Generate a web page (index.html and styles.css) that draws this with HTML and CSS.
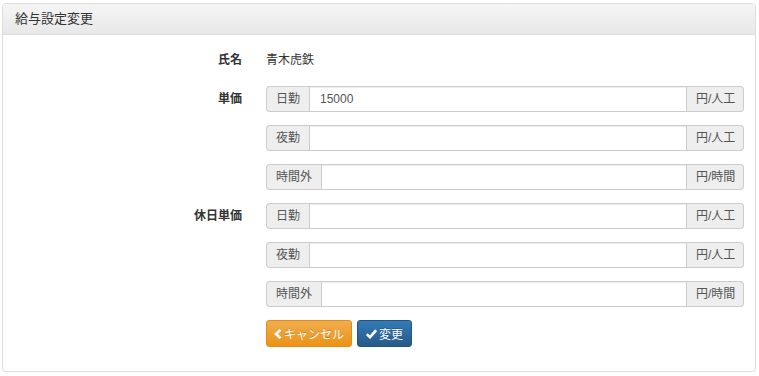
FILE: index.html
```html
<!DOCTYPE html>
<html lang="ja">
<head>
    <meta charset="UTF-8">
    <title>給与設定変更</title>
    <link rel="stylesheet" href="styles.css">
</head>
<body>

    <div class="panel">
        <div class="panel-heading">給与設定変更</div>

        <!-- Form -->
        <div class="panel-body form-horizontal">
            <div class="form-group">
                <label class="control-label">氏名</label>
                <div class="static-value">青木虎鉄</div>
            </div>

            <div class="form-group">
                <label class="control-label">単価</label>
                <div class="input-group">
                    <span class="addon addon-left">日勤</span>
                    <input type="text" class="form-control" value="15000">
                    <span class="addon addon-right">円/人工</span>
                </div>
            </div>
            <div class="form-group">
                <label class="control-label"></label>
                <div class="input-group">
                    <span class="addon addon-left">夜勤</span>
                    <input type="text" class="form-control">
                    <span class="addon addon-right">円/人工</span>
                </div>
            </div>
            <div class="form-group">
                <label class="control-label"></label>
                <div class="input-group">
                    <span class="addon addon-left">時間外</span>
                    <input type="text" class="form-control">
                    <span class="addon addon-right">円/時間</span>
                </div>
            </div>

            <div class="form-group">
                <label class="control-label">休日単価</label>
                <div class="input-group">
                    <span class="addon addon-left">日勤</span>
                    <input type="text" class="form-control">
                    <span class="addon addon-right">円/人工</span>
                </div>
            </div>
            <div class="form-group">
                <label class="control-label"></label>
                <div class="input-group">
                    <span class="addon addon-left">夜勤</span>
                    <input type="text" class="form-control">
                    <span class="addon addon-right">円/人工</span>
                </div>
            </div>
            <div class="form-group">
                <label class="control-label"></label>
                <div class="input-group">
                    <span class="addon addon-left">時間外</span>
                    <input type="text" class="form-control">
                    <span class="addon addon-right">円/時間</span>
                </div>
            </div>

            <div class="form-group">
                <label class="control-label"></label>
                <div class="buttons">
                    <button class="btn btn-warning">
                        <svg width="8" height="10" viewBox="0 0 8 10"><path d="M6.5 0.8 L2 5 L6.5 9.2" fill="none" stroke="#fff" stroke-width="2.6"/></svg>キャンセル
                    </button>
                    <button class="btn btn-primary">
                        <svg width="11" height="10" viewBox="0 0 11 10"><path d="M0.8 5.2 L4 8.2 L10.2 1.2" fill="none" stroke="#fff" stroke-width="2.6"/></svg>変更
                    </button>
                </div>
            </div>
        </div>
    </div>

</body>
</html>
```

FILE: styles.css
```css
/* General Styles */
body {
    margin: 3px 3px 3px 2px;
    font-family: "Liberation Sans", "Noto Sans CJK JP", sans-serif;
    font-size: 12px;
    color: #333;
    background: #fff;
}

.panel {
    border: 1px solid #ddd;
    border-radius: 4px;
    box-shadow: 0 1px 1px rgba(0, 0, 0, 0.05);
    height: 369px;
    box-sizing: border-box;
}

.panel-heading {
    height: 31px;
    box-sizing: border-box;
    padding: 0 12px;
    line-height: 30px;
    font-size: 13px;
    background: linear-gradient(to bottom, #f5f5f5, #e8e8e8);
    border-bottom: 1px solid #ddd;
    border-radius: 3px 3px 0 0;
}

.panel-body {
    padding: 12px 11px 0 0;
    display: flex;
    flex-direction: column;
    gap: 13px;
}

.form-group {
    display: grid;
    grid-template-columns: 239px 1fr;
    column-gap: 24px;
    align-items: center;
    height: 26px;
}

.control-label {
    text-align: right;
    font-weight: bold;
    line-height: 16px;
}

.static-value {
    line-height: 16px;
}

.input-group {
    display: flex;
    height: 26px;
}

.addon {
    background-color: #eee;
    border: 1px solid #ccc;
    padding: 4px 9px;
    line-height: 16px;
    white-space: nowrap;
    color: #555;
    text-align: center;
}

.addon-left {
    border-radius: 4px 0 0 4px;
    border-right: 0;
}

.addon-right {
    border-radius: 0 4px 4px 0;
    border-left: 0;
    width: 38px;
}

.form-control {
    flex: 1;
    min-width: 0;
    height: 26px;
    box-sizing: border-box;
    border: 1px solid #ccc;
    margin: 0;
    padding: 4px 10px;
    font-family: inherit;
    font-size: 12px;
    color: #555;
    box-shadow: inset 0 1px 1px rgba(0, 0, 0, 0.075);
    outline: none;
}

.buttons {
    display: flex;
    gap: 5px;
    height: 27px;
}

.btn {
    display: flex;
    align-items: center;
    justify-content: center;
    gap: 2px;
    height: 27px;
    padding: 0;
    border-radius: 3px;
    border: 1px solid;
    color: white;
    font-family: inherit;
    font-size: 12px;
    cursor: pointer;
    text-shadow: 0 -1px 0 rgba(0, 0, 0, 0.2);
}

.btn-warning {
    width: 86px;
    background: linear-gradient(to bottom, #f0ad4e, #eb9316);
    border-color: #e38d13;
}

.btn-primary {
    width: 55px;
    background: linear-gradient(to bottom, #337ab7, #265a88);
    border-color: #245580;
}
```
